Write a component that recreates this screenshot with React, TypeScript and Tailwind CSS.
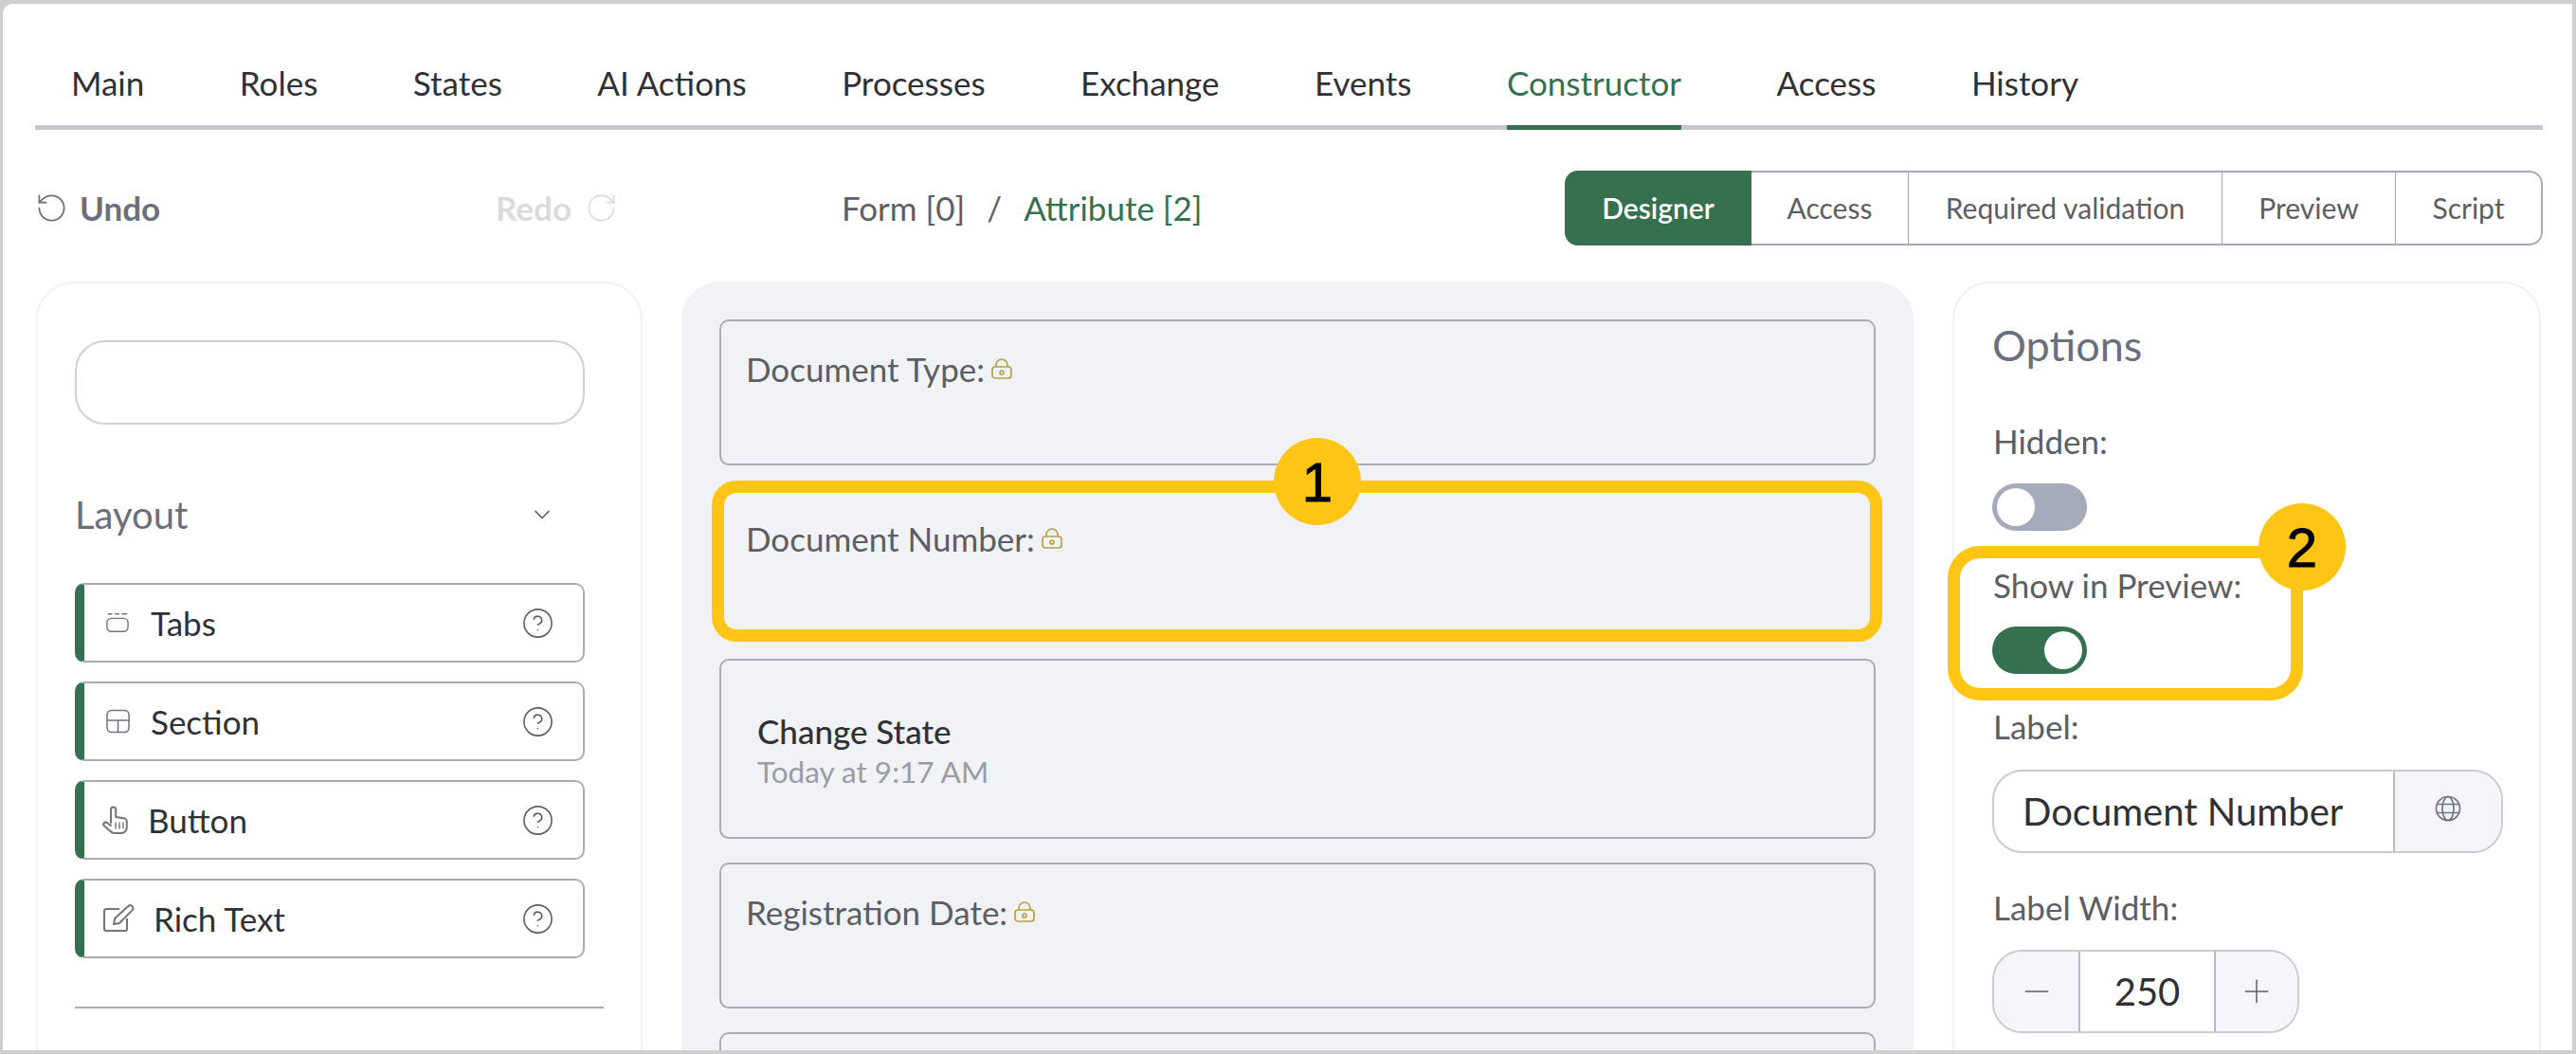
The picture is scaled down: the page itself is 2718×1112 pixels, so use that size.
import React from "react";
import { ChevronDown, CircleHelp, Minus, Plus, RotateCcw, RotateCw } from "lucide-react";

const tabs = ["Main", "Roles", "States", "AI Actions", "Processes", "Exchange", "Events", "Constructor", "Access", "History"];

const modes = [
  { name: "Access", width: "w-[166px]" },
  { name: "Required validation", width: "w-[331px]" },
  { name: "Preview", width: "w-[183px]" },
  { name: "Script", width: "w-[155px]" },
];

const LockIcon = () => (
  <svg viewBox="0 0 22 22" className="h-[22px] w-[22px] shrink-0" fill="none" stroke="#b8a23e" strokeWidth="1.7">
    <rect x="1" y="9" width="20" height="12" rx="3" />
    <path d="M5 9V7a6 6 0 0 1 12 0v2" />
    <circle cx="11" cy="15" r="2" />
  </svg>
);

const TabsIcon = () => (
  <svg viewBox="0 0 26 24" className="h-[24px] w-[26px]" fill="none" stroke="#6f7483" strokeWidth="1.6">
    <path d="M2 2h5M10 2h5M18 2h6" />
    <rect x="1" y="7" width="24" height="15" rx="5" />
  </svg>
);

const SectionIcon = () => (
  <svg viewBox="0 0 26 26" className="h-[26px] w-[26px]" fill="none" stroke="#6f7483" strokeWidth="1.6">
    <rect x="1" y="1" width="24" height="24" rx="5" />
    <path d="M1 12h24M13 12v13" />
  </svg>
);

const HandIcon = () => (
  <svg viewBox="0 0 27 30" className="h-[30px] w-[27px]" fill="none" stroke="#6f7483" strokeWidth="2" strokeLinejoin="round" strokeLinecap="round">
    <path d="M9 18V4a2.6 2.6 0 0 1 5.2 0v8l8 1.2a3.4 3.4 0 0 1 3.6 3.4V23a6 6 0 0 1-6 6h-7a5.5 5.5 0 0 1-4.2-2L1.6 21a2.3 2.3 0 0 1 3.4-3L9 21" />
    <path d="M14 18v6M18 18v6M22 18v6" strokeWidth="1.4" />
  </svg>
);

const PenIcon = () => (
  <svg viewBox="0 0 34 30" className="h-[30px] w-[34px]" fill="none" stroke="#6f7483" strokeWidth="2" strokeLinejoin="round">
    <path d="M18 5H4a2 2 0 0 0-2 2v19a2 2 0 0 0 2 2h20a2 2 0 0 0 2-2V15" />
    <path d="M12 21l1.2-6L27 2.2a2.6 2.6 0 0 1 4.5 4.2L18 20z" />
  </svg>
);

const GlobeIcon = () => (
  <svg viewBox="0 0 28 28" className="h-[28px] w-[28px]" fill="none" stroke="#6f7483" strokeWidth="1.7">
    <circle cx="14" cy="14" r="12.5" />
    <ellipse cx="14" cy="14" rx="6" ry="12.5" />
    <path d="M2.5 9.5h23M2.5 18.5h23" />
  </svg>
);

const widgets = [
  { name: "Tabs", icon: <TabsIcon />, iconBox: "w-[47px] pl-[23px]", ml: "ml-[23px]" },
  { name: "Section", icon: <SectionIcon />, iconBox: "w-[48px] pl-[23px]", ml: "ml-[22px]" },
  { name: "Button", icon: <HandIcon />, iconBox: "w-[49px] pl-[19px]", ml: "ml-[18px]" },
  { name: "Rich Text", icon: <PenIcon />, iconBox: "w-[53px] pl-[19px]", ml: "ml-[20px]" },
];

const Toggle = ({ on }: { on: boolean }) => (
  <div className={`flex h-[50px] w-[100px] items-center rounded-full px-[5px] ${on ? "justify-end bg-[#35704f]" : "justify-start bg-[#a5abbd]"}`}>
    <div className="h-[40px] w-[40px] rounded-full bg-white" />
  </div>
);

const FieldCard = ({ label }: { label: string }) => (
  <div className="h-[154px] rounded-[10px] border-2 border-[#a9acb8] pl-[26px] pt-[30px]">
    <div className="flex h-[40px] items-center gap-[7px] text-[35px] text-[#5c5e63]">
      <span>{label}</span>
      <LockIcon />
    </div>
  </div>
);

const OptionLabel = ({ text, mt }: { text: string; mt: string }) => (
  <div className={`h-[40px] pl-[1px] text-[35px] leading-[40px] text-[#5c5e63] ${mt}`}>{text}</div>
);

export default function App() {
  return (
    <div className="relative h-[1112px] w-[2718px] overflow-hidden bg-[#cfcfcf] pb-[4px] pl-[3px] pr-[4px] pt-[4px] font-['Lato',sans-serif]">
      <div className="h-full overflow-hidden rounded-tl-[10px] bg-white pl-[34px] pr-[31px]">
        <div className="flex h-[133px] gap-[100.5px] border-b-[5px] border-[#c5c6d2] pl-[38px] pt-[61px] text-[35px] text-[#2f3136]">
          {tabs.map((tab) =>
            tab === "Constructor" ? (
              <div key={tab} className="h-[72px] border-b-[5px] border-[#35704f] leading-[44px] text-[#35704f]">
                {tab}
              </div>
            ) : (
              <div key={tab} className="leading-[44px]">
                {tab}
              </div>
            )
          )}
        </div>

        <div className="mt-[43px] flex h-[79px] items-center">
          <div className="flex w-[615px] items-center justify-between text-[35px] font-bold">
            <div className="flex items-center gap-[12px] text-[#6b6e7c]">
              <RotateCcw size={35} strokeWidth={1.2} />
              <span>Undo</span>
            </div>
            <div className="flex items-center gap-[14px] text-[#d9dbe0]">
              <span>Redo</span>
              <RotateCw size={35} strokeWidth={1.2} />
            </div>
          </div>
          <div className="ml-[236px] flex items-center text-[35px] text-[#5c5e63]">
            <span>Form [0]</span>
            <span className="mx-[23px]">/</span>
            <span className="text-[#35704f]">Attribute [2]</span>
          </div>
          <div className="ml-auto flex h-[79px] w-[1032px] overflow-hidden rounded-[14px] text-[30px] text-[#5c5e63]">
            <div className="flex w-[197px] items-center justify-center bg-[#35704f] font-semibold text-white">Designer</div>
            {modes.map((mode) => (
              <div key={mode.name} className={`flex items-center justify-center border-y-2 border-r border-[#a5a8b8] last:rounded-r-[14px] last:border-r-2 ${mode.width}`}>
                {mode.name}
              </div>
            ))}
          </div>
        </div>

        <div className="mt-[38px] flex gap-[41px] pl-[1px]">
          <div className="h-[900px] w-[640px] rounded-[40px] border-2 border-[#f0f1f4] pl-[39px] pt-[60px]">
            <div className="h-[89px] w-[538px] rounded-[32px] border-2 border-[#cfd0d6]" />
            <div className="mt-[23px] flex h-[144px] w-[538px] items-center justify-between pr-[31px] text-[40px] text-[#6b6e7c]">
              <span>Layout</span>
              <ChevronDown size={28} strokeWidth={1.5} color="#5c5e63" />
            </div>
            <div className="flex w-[538px] flex-col gap-[20px]">
              {widgets.map((w) => (
                <div key={w.name} className="flex h-[84px] items-center rounded-[10px] border-2 border-l-[10px] border-[#a9acb8] border-l-[#35704f] text-[35px] text-[#2f3136]">
                  <div className={`flex shrink-0 items-center ${w.iconBox}`}>{w.icon}</div>
                  <span className={w.ml}>{w.name}</span>
                  <CircleHelp size={35} strokeWidth={1.1} color="#5c5e63" className="ml-auto mr-[30px]" />
                </div>
              ))}
            </div>
            <div className="mt-[51px] h-[2px] w-[558px] bg-[#a9acb8]" />
          </div>

          <div className="h-[900px] w-[1300px] rounded-[40px] bg-[#f0f2f6] px-[40px] pt-[40px]">
            <div className="flex flex-col gap-[25px]">
              <FieldCard label="Document Type:" />
              <FieldCard label="Document Number:" />
              <div className="h-[190px] rounded-[10px] border-2 border-[#a9acb8] pl-[38px] pt-[49px]">
                <div className="text-[35px] font-medium leading-[51px] text-[#2f3136]">Change State</div>
                <div className="text-[31.5px] leading-[34px] text-[#9a9ca5]">Today at 9:17 AM</div>
              </div>
              <FieldCard label="Registration Date:" />
              <div className="h-[154px] rounded-[10px] border-2 border-[#a9acb8]" />
            </div>
          </div>

          <div className="h-[900px] w-[621px] rounded-[40px] border-2 border-[#f0f1f4] pl-[40px] pt-[40px]">
            <div className="h-[50px] text-[45px] leading-[50px] text-[#6b6e7c]">Options</div>
            <OptionLabel text="Hidden:" mt="mt-[56px]" />
            <div className="mt-[25px]">
              <Toggle on={false} />
            </div>
            <OptionLabel text="Show in Preview:" mt="mt-[37px]" />
            <div className="mt-[24px]">
              <Toggle on={true} />
            </div>
            <OptionLabel text="Label:" mt="mt-[35px]" />
            <div className="mt-[26px] flex h-[88px] w-[539px] overflow-hidden rounded-[32px] border-2 border-[#c9cad2]">
              <div className="flex w-[421px] items-center pl-[30px] text-[40px] text-[#2f3136]">Document Number</div>
              <div className="flex flex-1 items-center justify-center border-l-2 border-[#b5b8c6] bg-[#f3f5fa] pb-[6px]">
                <GlobeIcon />
              </div>
            </div>
            <OptionLabel text="Label Width:" mt="mt-[37px]" />
            <div className="mt-[25px] flex h-[88px] w-[324px] overflow-hidden rounded-[32px] border-2 border-[#c9cad2]">
              <div className="flex w-[91px] items-center justify-center border-r-2 border-[#b5b8c6] bg-[#f3f5fa]">
                <Minus size={40} strokeWidth={0.9} color="#5c5e63" />
              </div>
              <div className="flex w-[141px] items-center justify-center text-[40px] text-[#2f3136]">250</div>
              <div className="flex flex-1 items-center justify-center border-l-2 border-[#b5b8c6] bg-[#f3f5fa]">
                <Plus size={40} strokeWidth={0.9} color="#5c5e63" />
              </div>
            </div>
          </div>
        </div>
      </div>

      <div className="absolute left-[751px] top-[507px] h-[170px] w-[1235px] rounded-[26px] border-[13px] border-[#fec514]" />
      <div className="absolute left-[1344px] top-[462px] flex h-[92px] w-[92px] items-center justify-center rounded-full bg-[#fec514] font-['Liberation_Sans',sans-serif] text-[58px] text-black [-webkit-text-stroke:1px_black]">
        1
      </div>
      <div className="absolute left-[2055px] top-[576px] h-[163px] w-[375px] rounded-[34px] border-[13px] border-[#fec514]" />
      <div className="absolute left-[2383px] top-[531px] flex h-[92px] w-[92px] items-center justify-center rounded-full bg-[#fec514] font-['Liberation_Sans',sans-serif] text-[58px] text-black [-webkit-text-stroke:1px_black]">
        2
      </div>
    </div>
  );
}
